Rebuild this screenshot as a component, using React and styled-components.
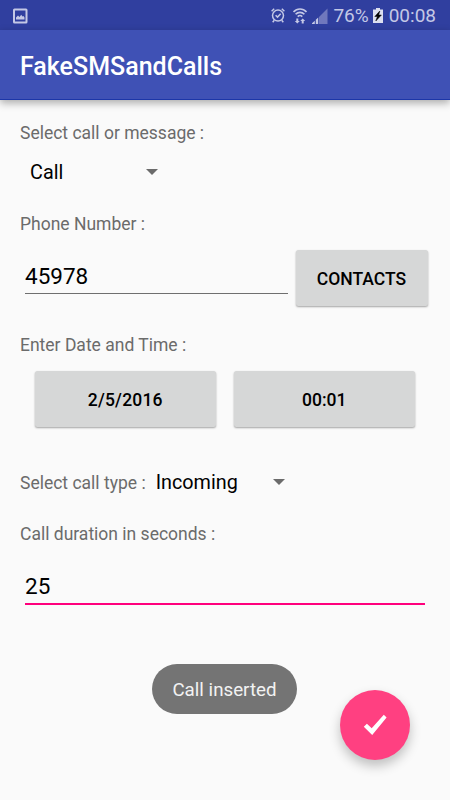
import React from 'react'
import styled, { createGlobalStyle } from 'styled-components'

const colors = {
  primary: '#3f51b5',
  primaryDark: '#303f9f',
  accent: '#ff4081',
  accentLine: '#ff007c',
  background: '#fafafa',
  button: '#d6d7d7',
  label: '#6b6b6b',
  statusIcon: '#c4c8e6',
}

const GlobalStyle = createGlobalStyle`
  * {
    box-sizing: border-box;
  }

  body {
    margin: 0;
    background: ${colors.background};
    font-family: Roboto, 'Liberation Sans', sans-serif;
  }
`

const Screen = styled.div`
  position: relative;
  display: flex;
  flex-direction: column;
  width: 450px;
  height: 800px;
  overflow: hidden;
  background: ${colors.background};
`

const StatusBar = styled.header`
  display: flex;
  align-items: center;
  justify-content: space-between;
  height: 30px;
  padding: 1px 14px 0 12px;
  background: ${colors.primaryDark};
  color: ${colors.statusIcon};
`

const StatusGroup = styled.div`
  display: flex;
  align-items: center;

  svg {
    display: block;
    margin-right: ${props => props.$gap || '0'};
  }
`

const StatusText = styled.span`
  margin-right: ${props => props.$gap || '0'};
  font-size: 19px;
  line-height: 22px;
  white-space: nowrap;
`

const AppBar = styled.div`
  display: flex;
  align-items: center;
  flex: none;
  height: 70px;
  padding: 5px 20px 0;
  border-bottom: 1px solid #1c36a8;
  background: ${colors.primary};
  box-shadow: 0 3px 8px rgba(0, 0, 0, 0.32);
`

const Title = styled.h1`
  margin: 0;
  color: #fff;
  font-size: 25px;
  font-weight: 500;
  line-height: 30px;
`

const Form = styled.main`
  display: flex;
  flex-direction: column;
  padding: 23px 20px 0;
`

const Label = styled.label`
  color: ${colors.label};
  font-size: 17.5px;
  line-height: 21px;
  white-space: nowrap;
`

const Row = styled.div`
  display: flex;
  align-items: ${props => props.$align || 'center'};
  gap: ${props => props.$gap || '0'};
  margin: ${props => props.$margin || '0'};
`

const SpinnerBox = styled.div`
  display: flex;
  align-items: center;
  justify-content: space-between;
  width: ${props => props.$width};
  height: 30px;
  color: #000;
  font-size: 19.8px;
  line-height: 24px;
`

const SpinnerValue = styled.span`
  padding-top: 2px;
`

const Arrow = styled.span`
  border: 6.5px solid transparent;
  border-top-color: ${colors.label};
  border-bottom: 0;
`

const Input = styled.input`
  width: ${props => props.$width};
  height: ${props => (props.$active ? '43px' : '41px')};
  margin: ${props => props.$margin || '0'};
  padding: ${props => (props.$active ? '6px' : '5px')} 0 0;
  border: 0;
  border-bottom: ${props =>
    props.$active ? `2px solid ${colors.accentLine}` : '1px solid #6f6f6f'};
  border-radius: 0;
  outline: none;
  background: transparent;
  color: #000;
  font-family: inherit;
  font-size: 22.5px;
`

const Button = styled.button`
  width: ${props => props.$width};
  height: 55.5px;
  padding: 2px 0 0;
  border: 0;
  border-radius: 2.5px;
  background: ${colors.button};
  box-shadow: 0 1px 2px rgba(0, 0, 0, 0.35);
  color: #000;
  font-family: inherit;
  font-size: 17.5px;
  font-weight: 500;
  letter-spacing: ${props => props.$spacing || 'normal'};
`

const Toast = styled.div`
  position: absolute;
  top: 664px;
  left: 152px;
  display: flex;
  align-items: center;
  justify-content: center;
  width: 145px;
  height: 50px;
  padding-top: 2px;
  border-radius: 25px;
  background: #747474;
  color: #f2f2f2;
  font-size: 18.75px;
  white-space: nowrap;
`

const Fab = styled.button`
  position: absolute;
  top: 690px;
  left: 340px;
  display: flex;
  align-items: center;
  justify-content: center;
  width: 70px;
  height: 70px;
  padding: 0;
  border: 0;
  border-radius: 50%;
  background: ${colors.accent};
  box-shadow: 0 6px 12px rgba(0, 0, 0, 0.24);
`

const PictureIcon = () => (
  <svg width="16" height="16" viewBox="0 0 16 16">
    <rect x="2" y="1.5" width="12.5" height="13" rx=".5" fill="none" stroke="currentColor" strokeWidth="2" />
    <path d="M4 11.5V9.5l2-2 1.5 1.5L9.2 6.8l1.3 1.7L11.5 8l1 1.5v2z" fill="currentColor" />
  </svg>
)

const AlarmIcon = () => (
  <svg width="14" height="15" viewBox="0 0 14 15" fill="none" stroke="currentColor" strokeWidth="1.5">
    <circle cx="7" cy="7.6" r="5.5" />
    <path d="M.6 3.2 3.2.8M13.4 3.2 10.8.8M3.3 12.2l-1.6 2M10.7 12.2l1.6 2M4.6 7.2l1.9 1.9 3.2-3.4" />
  </svg>
)

const WifiIcon = () => (
  <svg width="14" height="16" viewBox="0 0 14 16">
    <g fill="none" stroke="currentColor" strokeWidth="1.6">
      <path d="M.5 3.9c3.5-3.9 9.5-3.9 13 0M2.6 6.3c2.4-2.6 6.4-2.6 8.8 0M4.7 8.6c1.4-1.4 3.2-1.4 4.6 0" />
    </g>
    <path d="M4.3 15.5 1.8 13h1.5v-2.5h2V13h1.5zM9.7 10.5l2.5 2.5h-1.5v2.5h-2V13H7.2z" fill="currentColor" />
  </svg>
)

const SignalIcon = () => (
  <svg width="16" height="16" viewBox="0 0 16 16">
    <path d="M7 16V9L15.5.5V16z" fill="#7078bd" />
    <path d="M0 16v-.8L2.8 12.8V16zM3.8 16v-4.2L6.2 9.4V16z" fill="currentColor" />
  </svg>
)

const BatteryIcon = () => (
  <svg width="10" height="15" viewBox="0 0 10 15">
    <path d="M3 0h4v1.5h3V15H0V1.5h3z" fill="#dcdff0" />
    <path d="M6.8 3 1.8 8.5h2.6L2.8 13l5.6-6H5.7z" fill="#000" stroke="#000" strokeWidth=".5" />
  </svg>
)

const CheckIcon = () => (
  <svg width="24" height="22" viewBox="0 0 24 22">
    <path d="M.8 12.8 3.9 9.7l4.8 4.6L20.8.8l2.8 2.8L9.2 21z" fill="#fff" />
  </svg>
)

const Spinner = ({ value, width }) => (
  <SpinnerBox $width={width} role="listbox">
    <SpinnerValue>{value}</SpinnerValue>
    <Arrow />
  </SpinnerBox>
)

const App = () => (
  <>
    <GlobalStyle />
    <Screen>
      <StatusBar>
        <PictureIcon />
        <StatusGroup>
          <StatusGroup $gap="8px">
            <AlarmIcon />
          </StatusGroup>
          <StatusGroup $gap="5px">
            <WifiIcon />
            <SignalIcon />
          </StatusGroup>
          <StatusText $gap="4px">76%</StatusText>
          <StatusGroup $gap="6px">
            <BatteryIcon />
          </StatusGroup>
          <StatusText>00:08</StatusText>
        </StatusGroup>
      </StatusBar>
      <AppBar>
        <Title>FakeSMSandCalls</Title>
      </AppBar>

      <Form>
        <Label>Select call or message :</Label>
        <Row $margin="13px 0 27px 10px">
          <Spinner value="Call" width="128px" />
        </Row>

        <Label htmlFor="phone">Phone Number :</Label>
        <Row $margin="15px 0 29.5px 5px" $gap="7.5px" $align="flex-start">
          <Input id="phone" $width="263px" $margin="3px 0 0" defaultValue="45978" />
          <Button $width="132px">CONTACTS</Button>
        </Row>

        <Label>Enter Date and Time :</Label>
        <Row $margin="15px 0 40.5px 14.5px" $gap="17.5px">
          <Button $width="181.5px" $spacing="0.2px">
            2/5/2016
          </Button>
          <Button $width="181.5px">00:01</Button>
        </Row>

        <Row $gap="10px">
          <Row $margin="2px 0 0">
            <Label>Select call type :</Label>
          </Row>
          <Spinner value="Incoming" width="129.5px" />
        </Row>

        <Row $margin="27px 0 0">
          <Label htmlFor="duration">Call duration in seconds :</Label>
        </Row>
        <Input id="duration" $active $width="400px" $margin="17px 0 0 5px" defaultValue="25" />
      </Form>

      <Toast>Call inserted</Toast>
      <Fab aria-label="Save">
        <CheckIcon />
      </Fab>
    </Screen>
  </>
)

export default App
